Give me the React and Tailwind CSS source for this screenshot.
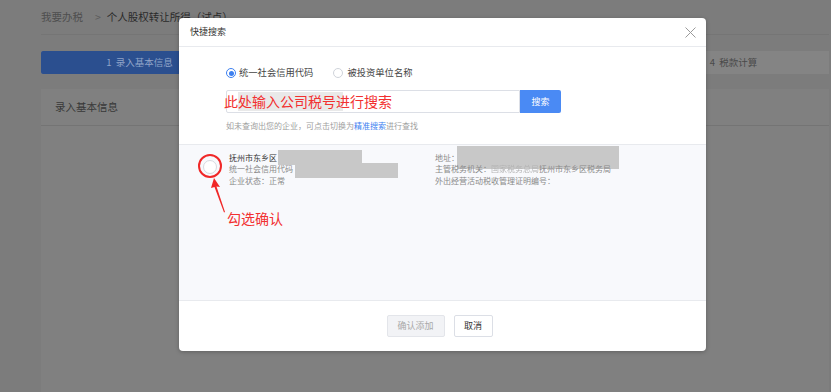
export default function App() {
  return (
    <div className="relative w-[831px] h-[392px] overflow-hidden bg-[#7c7c7c] font-['Noto_Sans_CJK_SC','Liberation_Sans',sans-serif]">
      {/* underlying page */}
      <div className="pl-[41px] pr-[2px]">
        <div className="h-[35px] flex items-center border-b border-[#757575] text-[10.5px]">
          <span className="text-[#4e4e4e]">我要办税</span>
          <span className="ml-[12px] mr-[6px] text-[#5a5a5a]">&gt;</span>
          <span className="text-[#2a2a2a]">个人股权转让所得（试点）</span>
        </div>
        <div className="mt-[16px] h-[23px] flex bg-[#848484] text-[9.5px]">
          <div className="w-1/4 bg-[#2b4f8f] rounded-l-[2px] text-[#90a4c8] flex items-center justify-center">1&nbsp;&nbsp;录入基本信息</div>
          <div className="w-1/4 flex items-center justify-center text-[#4a4a4a]">2&nbsp;&nbsp;填写申报表</div>
          <div className="w-1/4 flex items-center justify-center text-[#4a4a4a]">3&nbsp;&nbsp;附报资料</div>
          <div className="w-1/4 flex items-center justify-center text-[#4a4a4a] pl-[6px]">4&nbsp;&nbsp;税款计算</div>
        </div>
        <div className="mt-[15px] bg-[#808080] h-[400px]">
          <div className="h-[37px] flex items-center pl-[14px] border-b border-[#747474] text-[10.5px] text-[#383838]">录入基本信息</div>
        </div>
      </div>

      {/* modal */}
      <div className="absolute left-[179px] top-[18px] w-[527px] h-[333px] bg-white rounded-[4px] shadow-[0_1px_4px_rgba(0,0,0,0.25)] flex flex-col">
        <div className="h-[29px] shrink-0 flex items-center justify-between pl-[11px] pr-[10px] border-b border-[#e8eaee]">
          <span className="text-[9px] text-[#333]">快捷搜索</span>
          <svg width="11" height="11" viewBox="0 0 11 11" className="mt-[1px]">
            <path d="M0.5 0.5 L10.5 10.5 M10.5 0.5 L0.5 10.5" stroke="#9a9a9a" strokeWidth="1" fill="none" />
          </svg>
        </div>

        <div className="pl-[47px] pt-[20px] shrink-0">
          <div className="flex items-center h-[12px] text-[9.3px] text-[#444]">
            <span className="w-[10px] h-[10px] rounded-full border border-[#3d80f0] flex items-center justify-center">
              <span className="w-[5px] h-[5px] rounded-full bg-[#3d80f0]" />
            </span>
            <span className="ml-[3px]">统一社会信用代码</span>
            <span className="ml-[20px] w-[10px] h-[10px] rounded-full border border-[#cfd3da] bg-white" />
            <span className="ml-[4px]">被投资单位名称</span>
          </div>

          <div className="mt-[11px] flex h-[23px]">
            <div className="relative w-[294px] border border-[#dcdfe6] rounded-l-[2px] bg-white">
              <div className="absolute left-[11px] top-[1px] w-[105px] h-[19px] bg-[#e9e9e9]" />
              <span className="absolute left-[-3px] top-[1px] text-[14px] leading-[19px] text-[#f23030] whitespace-nowrap">此处输入公司税号进行搜索</span>
            </div>
            <div className="w-[41px] bg-[#4a8af4] rounded-r-[2px] flex items-center justify-center text-[9px] text-white">搜索</div>
          </div>

          <div className="mt-[8px] h-[10px] flex items-center text-[8px] text-[#a0a0a0] whitespace-nowrap">
            如未查询出您的企业，可点击切换为<span className="text-[#3d80f0]">精准搜索</span>进行查找
          </div>
        </div>

        <div className="mt-[13px] h-[157px] shrink-0 bg-[#f8f9fc] border-t border-b border-[#e8eaee] relative">
          <div className="flex pt-[7px] pl-[24px]">
            <div className="mt-[8px] w-[14px] h-[14px] rounded-full border border-[#d6d9df] bg-white shrink-0" />
            <div className="ml-[12px] w-[206px] shrink-0 text-[8px]">
              <div className="h-[11.5px] flex items-center text-[#333]">
                抚州市东乡区
                <div className="ml-[1px] w-[84px] h-[15px] bg-[#c8c8c8] shrink-0" />
              </div>
              <div className="h-[11.5px] flex items-center text-[#8a8a8a]">
                统一社会信用代码
                <div className="ml-[2px] mt-[3px] w-[103px] h-[15px] bg-[#c8c8c8] shrink-0" />
              </div>
              <div className="h-[11.5px] flex items-center text-[#8a8a8a]">企业状态：正常</div>
            </div>
            <div className="text-[8px] text-[#8a8a8a]">
              <div className="h-[11.5px] flex items-center">
                地址：
                <div className="ml-[-2px] w-[162px] h-[23px] bg-[#c8c8c8] shrink-0" />
              </div>
              <div className="h-[11.5px] flex items-center whitespace-nowrap">
                主管税务机关：<span className="text-[#b4b4b4] blur-[0.5px]">国家税务总局</span>抚州市东乡区税务局
              </div>
              <div className="h-[11.5px] flex items-center whitespace-nowrap">外出经营活动税收管理证明编号：</div>
            </div>
          </div>

          {/* annotations */}
          <div className="absolute left-[19px] top-[9px] w-[24px] h-[24px] rounded-full border-2 border-[#f02828]" />
          <svg className="absolute left-[30px] top-[33px]" width="20" height="36" viewBox="0 0 20 36">
            <polygon points="5,0 11,9 7.5,8.5 16,34 15,34.5 5.5,9 2,10" fill="#f02828" />
          </svg>
          <span className="absolute left-[48px] top-[65px] text-[14px] leading-[16px] text-[#f23030] whitespace-nowrap">勾选确认</span>
        </div>

        <div className="flex-1 flex items-center justify-center gap-[9px] pr-[6px]">
          <div className="w-[58px] h-[22px] rounded-[2px] border border-[#e3e5ea] bg-[#f2f3f6] flex items-center justify-center text-[9px] text-[#a8a8a8]">确认添加</div>
          <div className="w-[39px] h-[22px] rounded-[2px] border border-[#dcdfe6] bg-white flex items-center justify-center text-[9px] text-[#333]">取消</div>
        </div>
      </div>
    </div>
  );
}
